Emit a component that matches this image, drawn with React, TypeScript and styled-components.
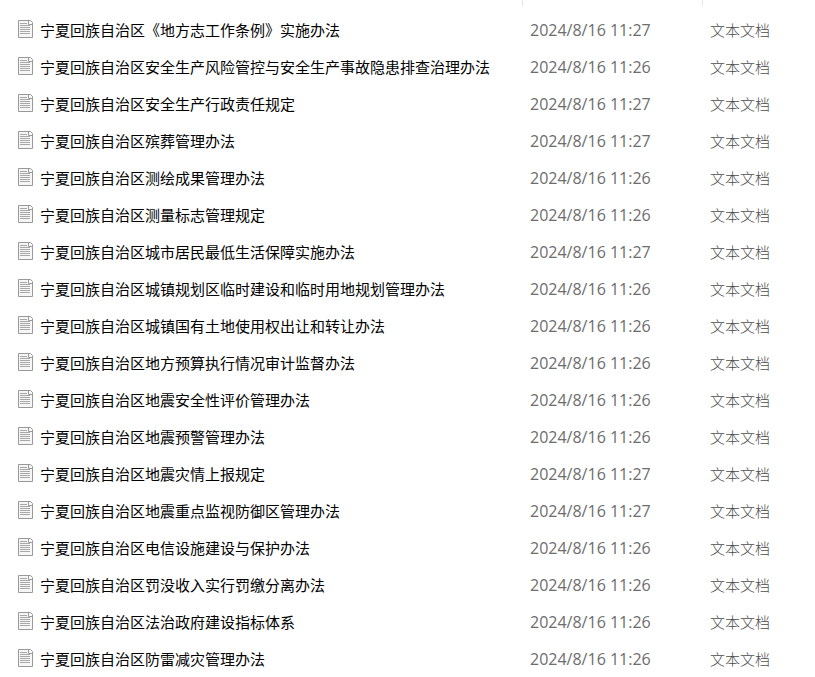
import React from "react";
import styled, { createGlobalStyle } from "styled-components";

const Global = createGlobalStyle`
  body { margin: 0; background: #fff; font-family: "Noto Sans", "Noto Sans CJK SC", sans-serif; }
`;

const FileList = styled.table`
  width: 100%;
  border-collapse: separate;
  border-spacing: 0;
  table-layout: fixed;
  font-size: 15px;
  line-height: 20px;
`;

const HeadCell = styled.th<{ $width?: number }>`
  box-sizing: border-box;
  width: ${(p) => (p.$width ? `${p.$width}px` : "auto")};
  height: 11px;
  padding: 0;
  background: ${(p) =>
    p.$width ? "linear-gradient(#e5e5e5, #e5e5e5) right top / 1px 6px no-repeat" : "none"};
`;

const Row = styled.tr`
  height: 37px;
`;

const Cell = styled.td`
  padding: 0 7px;
  color: #6d6d6d;
  white-space: nowrap;
`;

const TypeCell = styled(Cell)`
  color: #4c4c4c;
  font-weight: 300;
`;

const DateCell = styled(Cell)`
  font-family: "Open Sans", sans-serif;
  font-size: 16px;
`;

const NameCell = styled(Cell)`
  padding-left: 18px;
  color: #000;
`;

const FileName = styled.div`
  display: flex;
  align-items: center;
  gap: 7px;
`;

const Icon = styled.svg`
  flex: none;
  width: 15px;
  height: 20px;
`;

const HeadRow = styled.tr``;

function DocumentIcon() {
  return (
    <Icon viewBox="0 0 15 20" aria-hidden="true">
      <path d="M.5 .5h12l2 2v15H.5z" fill="#f6f6f6" stroke="#999" />
      <path d="M10.5 1v3.5H14" fill="#fff" stroke="#999" />
      <path d="M2 3.5h7M2 5.5h10M2 7.5h10M2 9.5h10M2 11.5h10M2 13.5h10" stroke="#a8a8a8" />
    </Icon>
  );
}

const files: [string, string][] = [
  ["宁夏回族自治区《地方志工作条例》实施办法", "27"],
  ["宁夏回族自治区安全生产风险管控与安全生产事故隐患排查治理办法", "26"],
  ["宁夏回族自治区安全生产行政责任规定", "27"],
  ["宁夏回族自治区殡葬管理办法", "27"],
  ["宁夏回族自治区测绘成果管理办法", "26"],
  ["宁夏回族自治区测量标志管理规定", "26"],
  ["宁夏回族自治区城市居民最低生活保障实施办法", "27"],
  ["宁夏回族自治区城镇规划区临时建设和临时用地规划管理办法", "26"],
  ["宁夏回族自治区城镇国有土地使用权出让和转让办法", "26"],
  ["宁夏回族自治区地方预算执行情况审计监督办法", "26"],
  ["宁夏回族自治区地震安全性评价管理办法", "26"],
  ["宁夏回族自治区地震预警管理办法", "26"],
  ["宁夏回族自治区地震灾情上报规定", "27"],
  ["宁夏回族自治区地震重点监视防御区管理办法", "27"],
  ["宁夏回族自治区电信设施建设与保护办法", "26"],
  ["宁夏回族自治区罚没收入实行罚缴分离办法", "26"],
  ["宁夏回族自治区法治政府建设指标体系", "26"],
  ["宁夏回族自治区防雷减灾管理办法", "26"],
];

export default function App() {
  return (
    <>
      <Global />
      <FileList>
        <thead>
          <HeadRow>
            <HeadCell $width={523} />
            <HeadCell $width={180} />
            <HeadCell />
          </HeadRow>
        </thead>
        <tbody>
          {files.map(([name, minute]) => (
            <Row key={name}>
              <NameCell>
                <FileName>
                  <DocumentIcon />
                  {name}
                </FileName>
              </NameCell>
              <DateCell>2024/8/16 11:{minute}</DateCell>
              <TypeCell>文本文档</TypeCell>
            </Row>
          ))}
        </tbody>
      </FileList>
    </>
  );
}
